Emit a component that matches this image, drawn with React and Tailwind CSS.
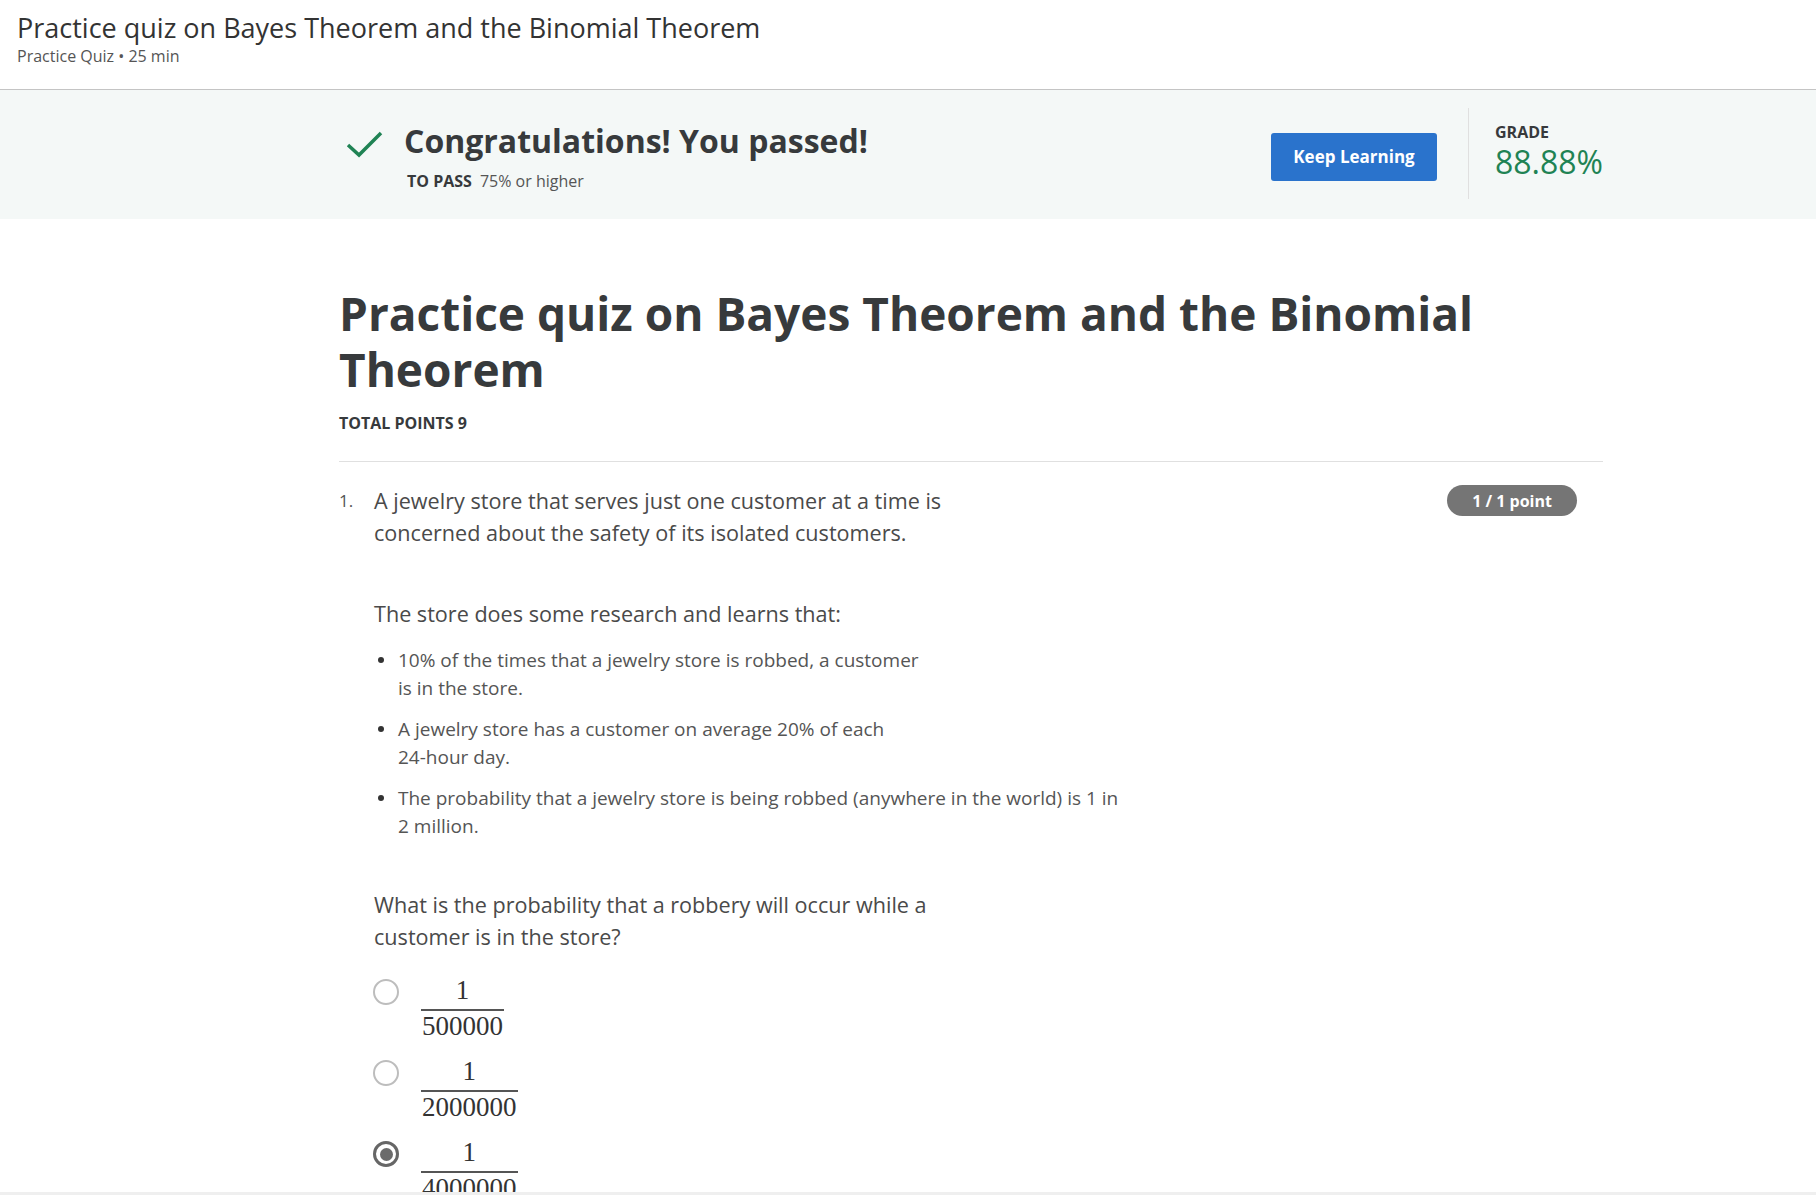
import React from 'react';

const font = { fontFamily: '"Open Sans", Arial, sans-serif' };

const Fraction = ({ num, den }) => (
    <div className="flex flex-col items-stretch" style={{ fontFamily: '"Liberation Serif", "Times New Roman", serif' }}>
        <div className="text-center text-[27px] leading-[30px] text-[#333] px-[1px]">{num}</div>
        <div className="mt-[4px] h-[2px] bg-[#555]"></div>
        <div className="text-center text-[27px] leading-[30px] text-[#333] px-[1px]">{den}</div>
    </div>
);

const Radio = ({ checked }) =>
    checked ? (
        <div className="mt-[4px] w-[26px] h-[26px] rounded-full border-[3px] border-[#666] flex items-center justify-center shrink-0">
            <div className="w-[13px] h-[13px] rounded-full bg-[#6b6b6b]"></div>
        </div>
    ) : (
        <div className="mt-[4px] w-[26px] h-[26px] rounded-full border-[2.5px] border-[#bdbdbd] shrink-0"></div>
    );

const options = [
    { den: '500000', checked: false },
    { den: '2000000', checked: false },
    { den: '4000000', checked: true },
];

const bullets = [
    ['10% of the times that a jewelry store is robbed, a customer', 'is in the store.'],
    ['A jewelry store has a customer on average 20% of each', '24-hour day.'],
    ['The probability that a jewelry store is being robbed (anywhere in the world) is 1 in', '2 million.'],
];

const App = () => {
    return (
        <div className="w-full h-[1195px] bg-white flex flex-col overflow-hidden" style={font}>
            {/* Top header */}
            <div className="h-[90px] shrink-0 border-b border-[#c4c4c4] px-[17px] pt-[12px]">
                <h2 className="text-[27px] leading-[32px] text-[#333]">Practice quiz on Bayes Theorem and the Binomial Theorem</h2>
                <p className="mt-[2px] text-[16px] leading-[20px] text-[#555]">Practice Quiz • 25 min</p>
            </div>

            {/* Passed banner */}
            <div className="h-[129px] shrink-0 bg-[#f4f8f7]">
                <div className="ml-[339px] w-[1264px] flex items-start h-full">
                    <svg className="mt-[40px] ml-[6px] shrink-0" width="38" height="28" viewBox="0 0 38 28" fill="none">
                        <path d="M3 15 L14 25 L36 3" stroke="#1f8354" strokeWidth="3.5" />
                    </svg>
                    <div className="ml-[21px] mt-[33px]">
                        <div className="text-[32px] leading-[36px] font-bold text-[#373a3c]">Congratulations! You passed!</div>
                        <div className="mt-[12px] text-[16px] leading-[20px] flex gap-[8px] pl-[3px]">
                            <span className="font-bold text-[#373a3c]">TO PASS</span>
                            <span className="text-[#555]">75% or higher</span>
                        </div>
                    </div>
                    <div className="flex-1"></div>
                    <button className="mt-[43px] w-[166px] h-[48px] rounded-[3px] bg-[#2a73cc] text-white text-[17px] font-bold">
                        Keep Learning
                    </button>
                    <div className="ml-[31px] mt-[18px] w-px h-[91px] bg-[#e0e0e0]"></div>
                    <div className="ml-[26px] mt-[32px] w-[108px]">
                        <div className="text-[16px] leading-[20px] font-bold text-[#373a3c]">GRADE</div>
                        <div className="text-[32px] leading-[40px] text-[#1f8354]">88.88%</div>
                    </div>
                </div>
            </div>

            {/* Quiz body */}
            <div className="flex-1 overflow-hidden">
                <div className="ml-[339px] w-[1264px]">
                    <h1 className="mt-[66px] text-[46px] leading-[56px] font-bold text-[#373a3c]">
                        Practice quiz on Bayes Theorem and the Binomial Theorem
                    </h1>
                    <div className="mt-[16px] text-[16px] leading-[20px] font-bold text-[#373a3c]">TOTAL POINTS 9</div>
                    <div className="mt-[28px] border-t border-[#e0e0e0]"></div>

                    <div className="mt-[23px] flex items-start">
                        <div className="w-[35px] shrink-0 text-[17px] leading-[32px] text-[#555]">1.</div>
                        <div className="flex-1 text-[#4a4a4a]">
                            <p className="text-[21.6px] leading-[32px]">
                                A jewelry store that serves just one customer at a time is
                                <br />
                                concerned about the safety of its isolated customers.
                            </p>
                            <p className="mt-[49px] text-[21.6px] leading-[32px]">The store does some research and learns that:</p>
                            <ul className="mt-[16px] flex flex-col gap-[13px]">
                                {bullets.map((b, i) => (
                                    <li key={i} className="flex items-start text-[19px] leading-[28px] text-[#555]">
                                        <div className="w-[24px] h-[28px] shrink-0 flex items-center pl-[4px]">
                                            <span className="w-[6px] h-[6px] rounded-full bg-[#333]"></span>
                                        </div>
                                        <div>
                                            {b[0]}
                                            <br />
                                            {b[1]}
                                        </div>
                                    </li>
                                ))}
                            </ul>
                            <p className="mt-[49px] text-[21.6px] leading-[32px]">
                                What is the probability that a robbery will occur while a
                                <br />
                                customer is in the store?
                            </p>
                            <div className="mt-[22px] flex flex-col gap-[15px]">
                                {options.map((o, i) => (
                                    <div key={i} className="flex items-start gap-[22px] -ml-px">
                                        <Radio checked={o.checked} />
                                        <Fraction num="1" den={o.den} />
                                    </div>
                                ))}
                            </div>
                        </div>
                        <div className="mr-[26px] shrink-0 w-[130px] h-[31px] rounded-full bg-[#757575] text-white text-[16px] font-bold flex items-center justify-center">
                            1 / 1 point
                        </div>
                    </div>
                </div>
            </div>

            <div className="h-[3px] shrink-0 bg-[#efefef]"></div>
        </div>
    );
};

export default App;
